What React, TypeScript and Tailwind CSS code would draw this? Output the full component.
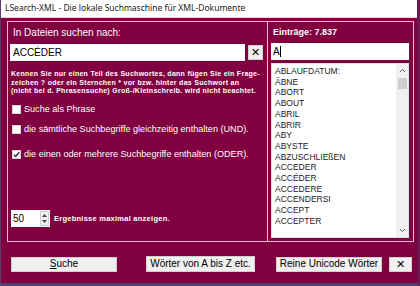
const words = [
    "ABLAUFDATUM:",
    "ÄBNE",
    "ABORT",
    "ABOUT",
    "ABRIL",
    "ABRIR",
    "ABY",
    "ABYSTE",
    "ABZUSCHLIEßEN",
    "ACCEDER",
    "ACCÉDER",
    "ACCEDERE",
    "ACCENDERSI",
    "ACCEPT",
    "ACCEPTER",
];

function CheckBox({ label, checked, className }: { label: string; checked?: boolean; className?: string }) {
    return (
        <label className={`flex items-center gap-[3px] ${className ?? ""}`}>
            <span className="w-[9px] h-[9px] bg-white border border-[#d8d8d8] flex items-center justify-center">
                {checked && (
                    <svg width="7" height="7" viewBox="0 0 7 7">
                        <path d="M0.8 3.6 L2.7 5.5 L6.2 1.2" fill="none" stroke="#222" strokeWidth="1.3" />
                    </svg>
                )}
            </span>
            <span className="text-[9.1px] text-white leading-none">{label}</span>
        </label>
    );
}

function Btn({ children, className }: { children: React.ReactNode; className?: string }) {
    return (
        <button
            className={`h-[15px] bg-[#f0f0f0] border border-[#d0d0d0] text-[10px] text-black leading-none flex items-center justify-center ${className ?? ""}`}
        >
            {children}
        </button>
    );
}

export default function App() {
    return (
        <div
            className="w-[420px] h-[286px] bg-[#800040] flex flex-col overflow-hidden border-l border-r-[3px] border-b-[3px] border-l-[#5b3a6e] border-r-[#6a1850] border-b-[#4f3f72]"
            style={{ fontFamily: '"Liberation Sans", Arial, sans-serif' }}
        >
            <div className="h-[18px] bg-white border-b border-[#dcdcdc] flex items-center pl-[4px] shrink-0">
                <span className="text-[8.5px] text-[#222]" style={{ fontFamily: '"Noto Sans", sans-serif' }}>
                    LSearch-XML - Die lokale Suchmaschine für XML-Dokumente
                </span>
            </div>

            <div className="flex pl-[6px] pt-[3px]">
                {/* left group */}
                <div className="w-[260px] h-[221px] border border-r-0 border-[#e8bcd2] flex flex-col pl-[2px]">
                    <div className="text-[10px] text-white pl-[3px] pt-[6px] leading-none">In Dateien suchen nach:</div>
                    <div className="flex items-center mt-[6px] gap-[3px]">
                        <div className="w-[235px] h-[17px] bg-white flex items-center pl-[3px] text-[10px] text-black">
                            ACCÉDER
                        </div>
                        <Btn className="w-[15px] h-[15px] text-[11px]">✕</Btn>
                    </div>
                    <div className="mt-[9px] pl-[1px] text-[7px] font-bold text-white leading-[8.5px] tracking-[0.28px] whitespace-nowrap">
                        <div>Kennen Sie nur einen Teil des Suchwortes, dann fügen Sie ein Frage-</div>
                        <div>zeichen ? oder ein Sternchen * vor bzw. hinter das Suchwort an</div>
                        <div>(nicht bei d. Phrasensuche) Groß-/Kleinschreib. wird nicht beachtet.</div>
                    </div>
                    <CheckBox label="Suche als Phrase" className="mt-[9px] pl-[2px]" />
                    <CheckBox
                        label="die sämtliche Suchbegriffe gleichzeitig enthalten (UND)."
                        className="mt-[11px] pl-[2px]"
                    />
                    <CheckBox
                        label="die einen oder mehrere Suchbegriffe enthalten (ODER)."
                        checked
                        className="mt-[16px] pl-[2px]"
                    />
                    <div className="flex items-center mt-[51px] gap-[4px] pl-[1px]">
                        <div className="w-[39px] h-[17px] bg-white flex items-center justify-between pl-[2px] pr-[1px]">
                            <span className="text-[10px] text-black">50</span>
                            <div className="w-[9px] h-[15px] flex flex-col bg-[#f0f0f0] border border-[#d0d0d0]">
                                <div className="flex-1 flex items-center justify-center">
                                    <svg width="5" height="3" viewBox="0 0 5 3">
                                        <path d="M0 3 L2.5 0 L5 3 Z" fill="#444" />
                                    </svg>
                                </div>
                                <div className="flex-1 flex items-center justify-center">
                                    <svg width="5" height="3" viewBox="0 0 5 3">
                                        <path d="M0 0 L2.5 3 L5 0 Z" fill="#444" />
                                    </svg>
                                </div>
                            </div>
                        </div>
                        <span className="text-[7.5px] font-bold text-white tracking-[0.25px]">
                            Ergebnisse maximal anzeigen.
                        </span>
                    </div>
                </div>

                {/* right group */}
                <div className="w-[147px] h-[221px] border border-[#e8bcd2] flex flex-col pl-[3px] pr-[4px]">
                    <div className="text-[9px] font-bold text-white pl-[2px] pt-[6px] leading-none">
                        Einträge: 7.837
                    </div>
                    <div className="mt-[6px] h-[17px] bg-white flex items-center pl-[2px] text-[10px] text-black">
                        A<span className="w-px h-[11px] bg-black" />
                    </div>
                    <div className="mt-[3px] h-[175px] bg-white flex border border-[#e0e0e0]">
                        <div className="flex-1 pl-[3px] pt-[2px] text-[8.5px] text-[#222] leading-[10.7px]">
                            {words.map((w) => (
                                <div key={w}>{w}</div>
                            ))}
                        </div>
                        <div className="w-[12px] bg-[#f0f0f0] flex flex-col items-center">
                            <svg width="7" height="5" viewBox="0 0 7 5" className="mt-[4px]">
                                <path d="M1 4 L3.5 1.5 L6 4" fill="none" stroke="#606060" strokeWidth="1" />
                            </svg>
                            <div className="w-[9px] h-[11px] bg-[#cdcdcd] mt-[5px]" />
                            <div className="flex-1" />
                            <svg width="7" height="5" viewBox="0 0 7 5" className="mb-[4px]">
                                <path d="M1 1 L3.5 3.5 L6 1" fill="none" stroke="#606060" strokeWidth="1" />
                            </svg>
                        </div>
                    </div>
                </div>
            </div>

            <div className="flex items-center mt-[14px] pl-[10px]">
                <Btn className="w-[106px]">
                    <span>
                        <span className="underline">S</span>uche
                    </span>
                </Btn>
                <Btn className="w-[109px] ml-[29px] h-[16px]">Wörter von A bis Z etc.</Btn>
                <Btn className="w-[106px] ml-[21px]">Reine Unicode Wörter</Btn>
                <Btn className="w-[23px] ml-[7px] text-[11px]">✕</Btn>
            </div>
        </div>
    );
}
